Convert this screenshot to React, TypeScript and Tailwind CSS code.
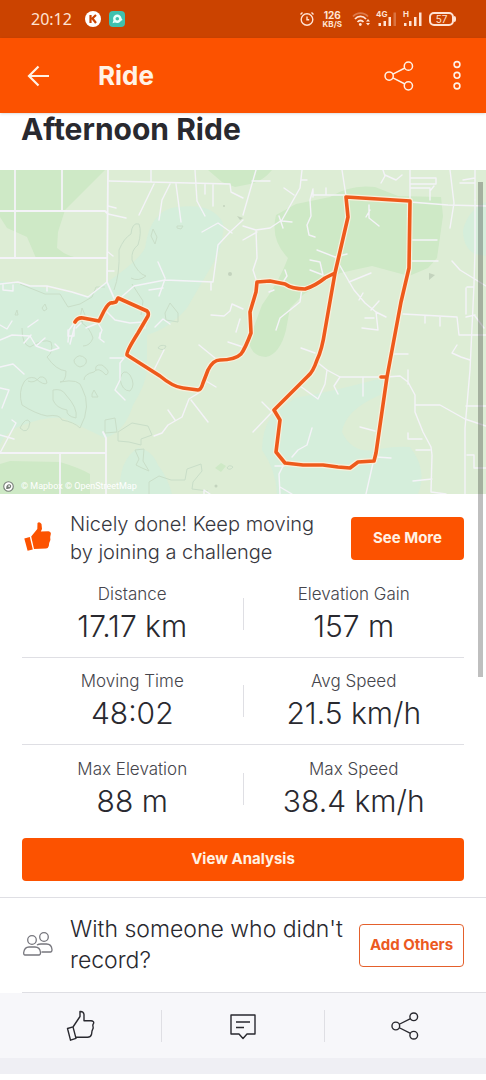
import type { ReactNode } from "react";

const stats = [
  [
    { label: "Distance", value: "17.17 km" },
    { label: "Elevation Gain", value: "157 m" },
  ],
  [
    { label: "Moving Time", value: "48:02" },
    { label: "Avg Speed", value: "21.5 km/h" },
  ],
  [
    { label: "Max Elevation", value: "88 m" },
    { label: "Max Speed", value: "38.4 km/h" },
  ],
];

function StatusBar() {
  return (
    <div className="flex h-[38px] items-center justify-between bg-[#cb4300] pl-[31px] pr-[30px] text-[#ffe3d4]">
      <div className="flex items-center gap-2">
        <span className="w-[42px] font-['Noto_Sans',sans-serif] text-[16px] leading-5">20:12</span>
        <svg className="ml-1 h-4 w-4" viewBox="0 0 16 16">
          <circle cx="8" cy="8" r="8" fill="#fff" />
          <path d="M5.5 4v8M11 4L6.5 8.3M7.5 7.5L11 12" fill="none" stroke="#cb4300" strokeWidth="2.2" />
        </svg>
        <svg className="h-4 w-4" viewBox="0 0 16 16">
          <rect width="16" height="16" rx="4" fill="#3fc1ae" />
          <circle cx="8.3" cy="7.7" r="3" fill="none" stroke="#e9fffb" strokeWidth="2.4" />
          <path d="M3.5 12.3l1-3 2 2zM11.500 10l2-1-1-2z" fill="#e9fffb" />
        </svg>
      </div>
      <div className="flex items-center">
        <svg className="h-4 w-4" viewBox="0 0 16 16" fill="none" stroke="currentColor" strokeWidth="1.4">
          <circle cx="8" cy="8.5" r="5.8" />
          <path d="M8 5.5v3.200h2.200M1.500 3.500l2-2M14.500 3.500l-2-2" />
        </svg>
        <div className="ml-2 text-center font-bold">
          <div className="text-[10px] leading-[10px]">126</div>
          <div className="text-[8px] leading-[8px]">KB/S</div>
        </div>
        <svg className="ml-[9px] h-4 w-[20px]" viewBox="0 0 20 16" fill="none" stroke="currentColor" strokeWidth="1.8">
          <path d="M2 5.500c4-4.500 11-4.500 15 0" opacity="0.35" />
          <path d="M4 8c3-3.500 8-3.500 11 0M6.500 11c1.800-2 4.200-2 6 0" />
          <circle cx="9.3" cy="13.5" r="1.4" fill="currentColor" stroke="none" />
          <path d="M15 10.500l2-2.500 2 2.500zM15 12l2 2.500 2-2.500z" fill="currentColor" stroke="none" />
        </svg>
        <span className="relative ml-[5px] block h-4 w-[20px]">
          <span className="absolute -top-px left-0 text-[8px] font-bold leading-[8px]">4G</span>
          <svg className="h-4 w-[20px]" viewBox="0 0 20 16" fill="currentColor">
            <path d="M2.500 12h2.500v3h-2.500zM7.500 10h2.500v5h-2.500zM12.500 6h2.500v9h-2.500z" />
            <path d="M17.500 1.500h2.500v13.500h-2.500z" opacity="0.3" />
          </svg>
        </span>
        <span className="relative ml-[7px] block h-4 w-[20px]">
          <span className="absolute -top-px left-0 text-[8px] font-bold leading-[8px]">H</span>
          <svg className="h-4 w-[20px]" viewBox="0 0 20 16" fill="currentColor">
            <path d="M1 12h2.500v3h-2.500zM6 10h2.500v5h-2.500zM11 6h2.500v9h-2.500zM16 1.500h2.500v13.500h-2.500z" />
          </svg>
        </span>
        <span className="ml-[6px] flex h-[14px] w-[25px] items-center justify-center rounded-[5px] border-2 border-current text-[10px] leading-none">
          57
        </span>
        <span className="h-[6px] w-[2px] rounded-r bg-current" />
      </div>
    </div>
  );
}

function ShareIcon({ className }: { className: string }) {
  return (
    <svg className={className} viewBox="0 0 32 32" fill="none" stroke="currentColor" strokeWidth="1.6">
      <circle cx="5.5" cy="16" r="4.4" />
      <circle cx="26" cy="5.5" r="4.4" />
      <circle cx="26" cy="26.5" r="4.4" />
      <path d="M9.500 14L22.300 7.500M9.500 18l12.800 6.500" />
    </svg>
  );
}

function RouteMap() {
  return (
    <div className="relative h-[324px] w-full overflow-hidden bg-[#ddedd5]">
      <svg className="h-full w-full" viewBox="0 0 486 324" preserveAspectRatio="xMidYMid slice" fill="none">
        {/* Land cover */}
        <g fill="#d5eedb">
          <path d="M0 111L40 117 88 126 120 103Q140 88 145 78 150 40 177 37 203 34 213 42 226 50 223 62 222 80 208 102L187 138 Q170 158 147 165L147 200Q146 214 133 235 125 262 105 268 80 256 63 248 45 246 20 256 5 262 0 275z" />
          <path d="M120 324Q118 290 138 278 152 280 158 295 168 308 172 324z" />
          <path d="M295 228Q340 220 385 207L380 225Q345 240 342 262 352 284 376 280 392 276 410 277 428 300 418 324H277Q276 300 262 280 262 262 270 248z" />
          <path d="M486 32Q468 40 463 60 463 78 475 84L486 86z" />
        </g>
        <g fill="#cee9c6">
          <path d="M0 0H105L65 40 58 62 57 78Q66 86 78 88H36L27 67 7 58 0 47z" />
          <path d="M208 0H272Q262 12 250 14L235 17 222 12z" />
          <path d="M276 45L296 34 330 27Q350 14 375 17L398 26 441 27 443 46 437 88 428 98 409 106 372 96 340 103 304 124 290 138 286 160Q280 184 266 187 250 186 249 170L262 135Q280 110 288 88 270 70 276 45z" />
          <path d="M0 294L10 291 60 292Q80 298 90 304V324H0z" />
          <path d="M215 298l6-5 5 3-5 6z" />
        </g>
        {/* Contour lines */}
        <g stroke="#c9dec8" strokeWidth="1" strokeLinejoin="round">
          <path d="M114 120Q120 104 119 80 124 68 131 64 132 52 139 54 142 62 138 75 131 80 132 90 138 104 146 106 138 112 131 108" />
          <path d="M153 59l4 8-2 7-4-8z" />
          <path d="M177 56l6 0-2 3-4-1z" />
          <path d="M132 114L143 131 141 145" />
          <path d="M170 133L178 143 178 152 166 150 165 143z" />
          <path d="M20 114L45 124 60 124 68 137 80 134 92 127 96 117 105 117" />
          <path d="M15 145l2-5 1 5zM42 138l3-4 2 5-3 2zM80 148l2-10 3 7-3 8z" />
          <path d="M22 158Q22 175 30 177 44 168 51 172 54 182 47 187 56 200 66 201 66 212 60 212 80 208 82 218 92 236 80 258 74 252 62 250 60 244 47 246 36 244 22 235 18 222 24 212 28 206 35 208 44 216 47 213 46 206 40 207 34 214 28 211" />
          <path d="M53 220Q62 218 66 225 78 238 76 248 66 246 67 240 56 238 53 230zM74 190q5-8 12-1 2 6-6 8-6-2-6-7M92 224l2-4 4 7-6 0zM120 209q3-12 10-4 6 10 0 16-8 0-10-12" />
          <path d="M83 176Q90 176 93 168 90 158 82 153M96 201Q94 194 102 195 112 202 106 205 98 196 94 202 84 204 84 210M20 258q6-12 10-6-2 14-10 6zM105 250l10-2 2 14-12 1z" />
          <path d="M118 262L132 253 148 256 152 265 141 269 141 275 129 272 118 271zM135 280L144 279 143 291 149 301 142 298 136 295 139 289z" />
          <path d="M149 324V312L159 306 171 310 185 310 187 299 201 294 202 301 193 312 192 319 208 321" />
          <path d="M158 178q2-4 8-2-2 6-8 2M227 298q2-4 6-1-3 4-6 1" />
        </g>
        <g fill="#c3d3bd">
          <circle cx="230" cy="104" r="2" />
          <circle cx="216" cy="316" r="1.5" />
          <circle cx="224" cy="36" r="1" />
          <path d="M429 103l6 2-6 5zM237 46l6 2-3 2z" />
        </g>
        {/* Roads */}
        <g stroke="#f4f3f8" strokeWidth="1.4" strokeLinejoin="round" strokeLinecap="round">
          <path d="M108 0L107 112 114 128M0 41H105L108 44M0 88H107M15 0V88M62 0V41" strokeWidth="1.8" />
          <path d="M0 283H106M106 324L106 268 103 262M60 283V324" strokeWidth="1.8" />
          <path d="M109 11L230 14 231 22 243 28M151 0V12M195 0L197 31 205 46M154 14L139 45M170 14L162 30 159 50M176 14L181 52M205 14V24M213 14V36M108 36l8 2M108 44l18 4M108 82l5 4M108 101h6" />
          <path d="M0 114L18 112 30 116 47 116 72 122 88 127 107 112M3 115v5l10 1v-6M47 116v5" />
          <path d="M118 130L134 116 165 110 213 112 218 75 230 62 243 50M202 62L218 53 232 63M165 109L159 126M165 108L158 92M149 120l14-2M211 113v7" />
          <path d="M107 142L115 150 130 153 144 152 145 158M155 157L163 149 170 154M75 152L69 160 68 172M75 155L70 174M86 158L98 153 102 160 99 168M81 153L76 158" />
          <path d="M0 155L7 159 12 151M0 170L12 165 30 166 36 176 45 168M36 176L50 181 59 178 55 174M24 173l7-8M68 160v6l6 0v-8M100 163v6l4 3" />
          <path d="M0 197L13 194 24 204M0 218L9 220 2 238M12 250L16 253 0 283M0 265L14 269M28 157L38 150" />
          <path d="M110 188H124L120 193 120 210 115 220 125 230M200 222L189 229 182 247 168 255 162 263 154 266M168 240L175 250M191 230L208 252M199 175L215 188M206 211L216 217M164 180L154 200" />
          <path d="M211 145L224 146 230 141 232 134 243 139M240 149L236 162M228 172L243 177M204 324V320L210 324" />
          <path d="M256 0L243 45M243 56L256 60 257 88 253 100 257 112M256 60L270 58 282 50 300 18 302 0M279 46L283 58M282 51L292 52M302 10h5M284 18L294 25M252 11L270 11M257 62L243 70" />
          <path d="M313 19L310 30 311 46 307 55 309 65 315 67M313 20V27M313 25H346M342 0L346 26M326 18V24M383 0L385 6 381 13M385 5L396 10 402 5M369 35V48L379 56M370 40L366 47M410 0V31M410 8L436 8 436 14H410M410 18H430V30M430 21L434 16" />
          <path d="M410 32L448 35 486 36M450 0L454 33 450 58M475 0V30M463 10l12-2M460 13h15M410 70H437M410 91H438M317 80L335 87 347 108 354 120 365 133 376 142 386 147M335 87L347 84M349 112L371 103M359 130L363 123M371 140L379 131M376 142L378 160 362 158M374 148L365 148" />
          <path d="M310 90L320 92 323 105 310 100M285 100L287 106 281 115M302 118L300 132 280 148 276 160M274 120L269 122" />
          <path d="M403 144L457 147 459 165H486M425 146v7M440 147v9M452 91L460 100 486 116M475 80L474 115 470 200 465 258V324M466 118V144M467 117h6M466 147L475 145M470 190L461 187 452 183 457 175M475 146L484 158M475 30V80" />
          <path d="M317 192L327 200 340 207H381M327 200L325 214 318 229 300 216M340 207L334 216 338 224M363 207V226M386 207L400 206 408 212 415 225 415 242 423 262 431 277 432 285 431 322 446 324M408 200V214M416 235H440L465 249 486 256M408 263V269H422M416 280H430M413 311L432 309M466 236H486M467 285H474V298H486M360 257L375 261M394 184H408" />
          <path d="M262 232L272 242 253 262M280 250L275 245M301 178L315 183M284 294L279 304 280 324M275 296H284M280 317L292 324M373 293L366 324M376 287L391 288M312 258L307 275 298 280 292 287" />
        </g>
        {/* Recorded route */}
        <g strokeLinejoin="round" strokeLinecap="round">
          {["#f8f0dc", "#ee5a1b"].map((color, i) => (
            <path
              key={color}
              stroke={color}
              strokeWidth={i === 0 ? 6 : 3.6}
              d="M75 152Q78 147 83 148L99 151 104 141Q109 132 112 133L116 132 118 128 147 141Q149 143 148 146L138 163Q126 182 127 185L160 206Q173 217 183 218L198 220Q201 220 203 213L208 200Q213 190 220 190 235 190 241 184 245 179 251 163L250 142 256 122 257 112 270 111 285 114Q292 119 305 119 315 116 325 108L335 103 348 47 346 27 410 31 409 98 401 132 387 207 376 283 374 291 358 292 350 298 338 297 323 295 303 295 285 293 276 282 280 250 274 240 308 206Q313 202 317 190 322 180 325 160L335 103M381 207H387"
            />
          ))}
        </g>
      </svg>
      <div className="absolute bottom-px left-[3px] flex items-center gap-[7px] font-[Roboto,sans-serif] text-[9px] leading-[14px] text-white">
        <svg className="h-[11px] w-[11px]" viewBox="0 0 12 12">
          <circle cx="6" cy="6" r="5.2" fill="#fff" stroke="#777e78" strokeWidth="1.2" />
          <path d="M3.500 8.700C3 5 5 3.300 7 3.500s2.500 2.500 1.300 3.800S5.500 8.700 3.500 8.700z" fill="#777e78" />
          <circle cx="6.7" cy="5.5" r="1" fill="#fff" />
        </svg>
        <span>© Mapbox © OpenStreetMap</span>
      </div>
    </div>
  );
}

function ActionButton({ label, children }: { label: string; children: ReactNode }) {
  return (
    <button aria-label={label} className="flex h-8 flex-1 items-center justify-center text-[#29292f]">
      {children}
    </button>
  );
}

export default function App() {
  return (
    <div className="relative w-full bg-white font-[Inter,sans-serif] text-[#29292f]">
      <StatusBar />

      {/* Header */}
      <header className="flex h-[75px] items-center bg-[#fc5200] pl-6 pr-[21px] text-[#fff2e5] shadow-sm">
        <button aria-label="Back" className="flex h-7 w-7 items-center justify-center">
          <svg className="h-6 w-6" viewBox="0 0 24 24" fill="none" stroke="currentColor" strokeWidth="2.2">
            <path d="M12.500 2.500L3 12l9.500 9.500M3 12H23" />
          </svg>
        </button>
        <h1 className="ml-[46px] flex-1 text-[26px] font-bold leading-8">Ride</h1>
        <button aria-label="Share">
          <ShareIcon className="h-[30px] w-[30px]" />
        </button>
        <button aria-label="More options" className="ml-[35px]">
          <svg className="h-8 w-4" viewBox="0 0 16 32" fill="none" stroke="currentColor" strokeWidth="1.6">
            <circle cx="8" cy="4.5" r="2.9" />
            <circle cx="8" cy="15.3" r="2.9" />
            <circle cx="8" cy="26" r="2.9" />
          </svg>
        </button>
      </header>

      <main>
        <h2 className="h-[57px] px-[21px] text-[30px] font-bold leading-8">Afternoon Ride</h2>
        <RouteMap />

        {/* Challenge prompt */}
        <section className="flex items-center px-[22px] pb-[5px] pt-4">
          <svg className="h-8 w-8 shrink-0" viewBox="0 0 32 32" fill="#fc5200">
            <path d="M2.300 16.500l5.500-1.500 3 12.500-5.200 1.300zM9.200 14.500L15.300 7 15.500 1Q17.500-.8 19.500 2L20 7 18.800 9.500 26.500 9.300Q29.500 10 28.700 12.500L28.200 15 28.400 18 27.200 21 26.800 24Q26 26.500 24 26.500L12 27z" />
          </svg>
          <p className="ml-4 flex-1 pr-6 text-[20px] font-light leading-7 text-[#37373e]">
            Nicely done! Keep moving by joining a challenge
          </p>
          <button className="h-[43px] w-[113px] rounded bg-[#fc5200] text-[15px] font-bold text-[#fff2e5]">
            See More
          </button>
        </section>

        {/* Ride stats */}
        <section className="mx-[22px] divide-y divide-[#dfdfe4]">
          {stats.map(([left, right]) => (
            <div key={left.label} className="flex h-[87px] items-center">
              <Stat {...left} />
              <div className="h-8 w-px shrink-0 bg-[#dfdfe4]" />
              <Stat {...right} />
            </div>
          ))}
        </section>

        <div className="border-b border-[#dfdfe4] px-[22px] pb-4 pt-[6px]">
          <button className="h-[43px] w-full rounded bg-[#fc5200] text-[15px] font-bold text-[#fff2e5]">
            View Analysis
          </button>
        </div>

        {/* Add others */}
        <section className="ml-[22px] flex items-center border-b border-[#dfdfe4] pb-4 pr-[22px] pt-4">
          <svg className="h-8 w-8 shrink-0" viewBox="0 0 32 32" fill="none" stroke="#77777e" strokeWidth="1.3">
            <circle cx="10" cy="11" r="4.3" />
            <circle cx="22" cy="8" r="4.3" />
            <path d="M3 26Q1.500 26 1.700 23.500 2.500 18 7 18h6q5 0 5.500 5.500 0 2.500-1.500 2.500zM15 16q1.500-1 4-1h5.500q5 0 5.500 5.500 0 2.500-1.500 2.500H19.500" />
          </svg>
          <p className="ml-4 flex-1 text-[23px] font-light leading-[31px]">With someone who didn't record?</p>
          <button className="h-[43px] w-[105px] shrink-0 rounded border border-[#e4602c] bg-white text-[15px] font-bold text-[#ec5a1f]">
            Add Others
          </button>
        </section>
      </main>

      {/* Bottom actions */}
      <nav className="flex h-[65px] items-center divide-x divide-[#dfdfe4] bg-[#f7f7fa]">
        <ActionButton label="Give kudos">
          <svg className="h-8 w-8" viewBox="0 0 32 32" fill="none" stroke="currentColor" strokeWidth="1.4" strokeLinejoin="round">
            <path d="M2.500 18.500l5.500-1.600 3 11.500-5.500 1.800zM8 17L15 6.500V1.500Q18.500 1.200 19 4.500L19 10.800H26Q29 11 28.700 13L27.800 15 28.200 18 27 21 26.500 24.500Q25.500 27.300 22.500 27.300H10.700" />
          </svg>
        </ActionButton>
        <ActionButton label="Comment">
          <svg className="h-8 w-8" viewBox="0 0 32 32" fill="none" stroke="currentColor" strokeWidth="1.4" strokeLinejoin="round">
            <path d="M4 5h24v19h-8l-4 4.500-4-4.500H4zM9 12h14M9 17.500h8" />
          </svg>
        </ActionButton>
        <ActionButton label="Share activity">
          <ShareIcon className="h-7 w-7" />
        </ActionButton>
      </nav>
      <div className="h-4 bg-[#efeff4]" />

      {/* Scroll position */}
      <div className="absolute right-[3px] top-[182px] h-[495px] w-[5px] bg-black/25" />
    </div>
  );
}

function Stat({ label, value }: { label: string; value: string }) {
  return (
    <div className="flex-1 text-center">
      <div className="text-[17px] font-light leading-6 text-[#45454c]">{label}</div>
      <div className="text-[30px] font-light leading-10">{value}</div>
    </div>
  );
}
